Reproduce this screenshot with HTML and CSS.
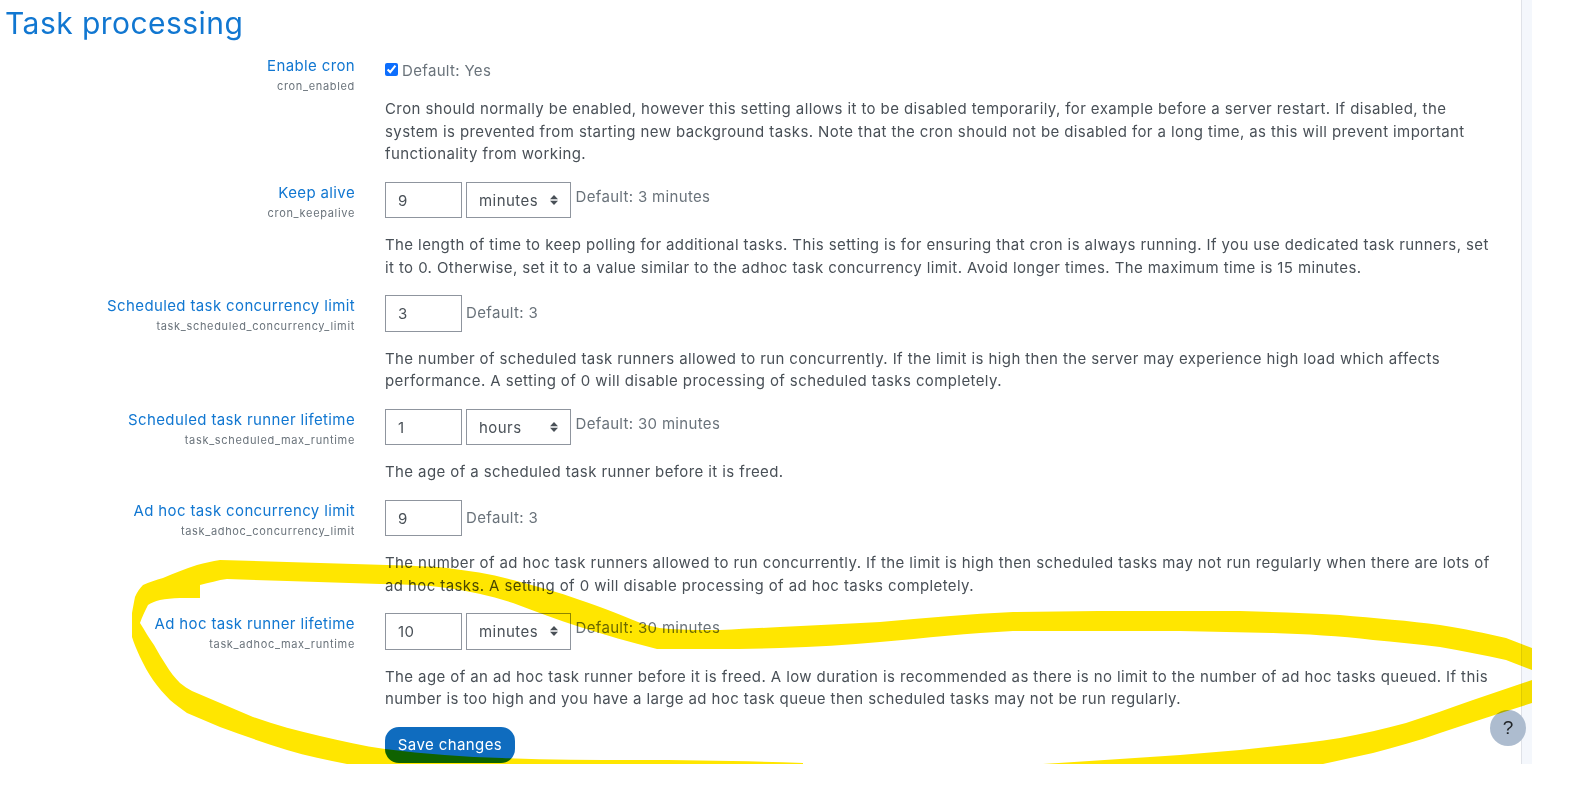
FILE: index.html
```html
<!DOCTYPE html>
<html lang="en">
<head>
<meta charset="utf-8">
<title>Task processing</title>
<link rel="stylesheet" href="styles.css">
</head>
<body>
<div class="page">
  <main class="main">
    <h2 class="title">Task processing</h2>

    <section class="row">
      <div class="label"><a class="name">Enable cron</a><small class="key">cron_enabled</small></div>
      <div class="field">
        <div class="control control-check">
          <input class="check" type="checkbox" checked>
          <span class="default">Default: Yes</span>
        </div>
        <p class="desc">Cron should normally be enabled, however this setting allows it to be disabled temporarily, for example before a server restart. If disabled, the<br>system is prevented from starting new background tasks. Note that the cron should not be disabled for a long time, as this will prevent important<br>functionality from working.</p>
      </div>
    </section>

    <section class="row">
      <div class="label"><a class="name">Keep alive</a><small class="key">cron_keepalive</small></div>
      <div class="field">
        <div class="control">
          <input class="num" type="text" value="9">
          <div class="select"><select class="sel"><option>minutes</option></select>
            <svg class="updown" viewBox="0 0 8 10" aria-hidden="true"><path d="M4 0 8 4.3H0zM4 10 0 5.7h8z"/></svg></div>
          <span class="default default-sel">Default: 3 minutes</span>
        </div>
        <p class="desc">The length of time to keep polling for additional tasks. This setting is for ensuring that cron is always running. If you use dedicated task runners, set<br>it to 0. Otherwise, set it to a value similar to the adhoc task concurrency limit. Avoid longer times. The maximum time is 15 minutes.</p>
      </div>
    </section>

    <section class="row">
      <div class="label"><a class="name">Scheduled task concurrency limit</a><small class="key">task_scheduled_concurrency_limit</small></div>
      <div class="field">
        <div class="control">
          <input class="num" type="text" value="3">
          <span class="default default-num">Default: 3</span>
        </div>
        <p class="desc">The number of scheduled task runners allowed to run concurrently. If the limit is high then the server may experience high load which affects<br>performance. A setting of 0 will disable processing of scheduled tasks completely.</p>
      </div>
    </section>

    <section class="row">
      <div class="label"><a class="name">Scheduled task runner lifetime</a><small class="key">task_scheduled_max_runtime</small></div>
      <div class="field">
        <div class="control">
          <input class="num" type="text" value="1">
          <div class="select"><select class="sel"><option>hours</option></select>
            <svg class="updown" viewBox="0 0 8 10" aria-hidden="true"><path d="M4 0 8 4.3H0zM4 10 0 5.7h8z"/></svg></div>
          <span class="default default-sel">Default: 30 minutes</span>
        </div>
        <p class="desc">The age of a scheduled task runner before it is freed.</p>
      </div>
    </section>

    <section class="row">
      <div class="label"><a class="name">Ad hoc task concurrency limit</a><small class="key">task_adhoc_concurrency_limit</small></div>
      <div class="field">
        <div class="control">
          <input class="num" type="text" value="9">
          <span class="default default-num">Default: 3</span>
        </div>
        <p class="desc">The number of ad hoc task runners allowed to run concurrently. If the limit is high then scheduled tasks may not run regularly when there are lots of<br>ad hoc tasks. A setting of 0 will disable processing of ad hoc tasks completely.</p>
      </div>
    </section>

    <section class="row">
      <div class="label"><a class="name">Ad hoc task runner lifetime</a><small class="key">task_adhoc_max_runtime</small></div>
      <div class="field">
        <div class="control">
          <input class="num" type="text" value="10">
          <div class="select"><select class="sel"><option>minutes</option></select>
            <svg class="updown" viewBox="0 0 8 10" aria-hidden="true"><path d="M4 0 8 4.3H0zM4 10 0 5.7h8z"/></svg></div>
          <span class="default default-sel">Default: 30 minutes</span>
        </div>
        <p class="desc">The age of an ad hoc task runner before it is freed. A low duration is recommended as there is no limit to the number of ad hoc tasks queued. If this<br>number is too high and you have a large ad hoc task queue then scheduled tasks may not be run regularly.</p>
      </div>
    </section>

    <div class="actions"><button class="save" type="button">Save changes</button></div>
  </main>
  <aside class="rail"></aside>
  <button class="help" type="button">?</button>
  <svg class="marker" viewBox="0 0 1532 764" aria-hidden="true">
    <path fill="#ffe600" d="M220 560 C245 561 265 561 287 562 L387 565 C410 566 430 566 447 568 C470 571 492 574 513 580 C535 586 558 592 580 600 C600 607 617 613 633 620 C645 625 655 628 670 629 C685 630 702 630 720 630 C742 629 760 628 780 627 C815 625 848 624 880 622 C925 618 970 614 1013 612 C1070 611 1125 611 1180 611 C1200 611 1220 611 1240 611 C1275 612 1305 613 1340 615 C1375 618 1410 621 1440 625 C1465 629 1485 633 1506 638 L1532 648 V670 L1506 660 C1485 655 1462 651 1440 647 C1418 644 1395 642 1373 640 C1340 636 1305 634 1273 633 L1180 631 H1013 C970 633 925 638 880 642 C848 645 815 647 780 648 C758 649 735 649 713 649 L657 649 C630 642 605 635 580 627 C558 620 535 611 513 603 C492 596 470 591 447 588 C425 585 403 584 380 584 L287 581 L227 579 C218 580 209 583 200 585 V598 L180 598 C172 598 166 599 160 600 C155 601 151 603 148 605 C145 611 142 617 140 623 C145 631 149 638 154 645 C158 652 162 659 166 665 C170 672 175 678 180 683 C184 686 188 689 192 691 L253 717 C275 725 298 731 320 736 C342 741 363 746 385 749 C425 754 465 757 502 758 C545 760 590 760 636 760 C690 760 750 761 803 763 V764 H347 C327 760 307 756 287 750 C264 743 242 735 220 727 L187 713 C181 709 175 704 170 700 C164 694 158 687 153 680 C148 673 144 665 140 657 C137 650 134 644 132 637 V613 C133 607 134 602 135 597 C137 592 140 588 143 585 C149 582 156 580 163 578 C174 573 185 569 197 565 C205 563 212 561 220 560 Z M1043 764 C1090 761 1135 758 1180 755 L1240 750 C1275 746 1310 743 1340 738 C1362 734 1384 729 1406 723 C1428 716 1450 708 1473 700 L1532 680 V703 C1500 713 1470 723 1440 733 C1418 741 1395 747 1373 753 C1356 757 1340 760 1323 764 Z"/>
  </svg>
</div>
</body>
</html>
```
FILE: styles.css
```css
* { box-sizing: border-box; }
html, body { margin: 0; padding: 0; background: #fff; }
body {
  font-family: Inter, "Noto Sans", sans-serif;
  font-size: 15px;
  color: #495057;
}
.page {
  position: relative;
  display: flex;
  width: 1532px;
  height: 764px;
  overflow: hidden;
}
.main { flex: 1; min-width: 0; }
.title {
  margin: 0;
  padding: 5px 0 0 5px;
  height: 55.4px;
  font-size: 30px;
  line-height: 36px;
  font-weight: 400;
  letter-spacing: 0.45px;
  color: #1177d1;
}
.row {
  display: grid;
  grid-template-columns: 355px 1fr;
  column-gap: 30px;
  margin-bottom: 16px;
}
.label {
  display: flex;
  flex-direction: column;
  align-items: flex-end;
}
.name { color: #1177d1; line-height: 22px; letter-spacing: 0.37px; }
.key { color: #6a737b; font-size: 11px; line-height: 16px; margin-top: 1px; letter-spacing: 0.67px; }
.control { display: flex; align-items: flex-start; }
.control-check { height: 27px; align-items: center; }
.check {
  width: 13px;
  height: 13px;
  margin: 2px 4px 0 0;
  accent-color: #0d6efd;
}
.num, .sel {
  height: 36.5px;
  border: 1px solid #8f959e;
  border-radius: 0;
  background: #fff;
  color: #495057;
  font: inherit;
  letter-spacing: 0.45px;
  padding: 0 0 0 12px;
  outline: none;
}
.num { width: 77px; }
.select { position: relative; margin-left: 4px; }
.sel { display: block; width: 105px; appearance: none; }
.updown {
  position: absolute;
  right: 13px;
  top: 13px;
  width: 8px;
  height: 10px;
  fill: #495057;
  pointer-events: none;
}
.default { color: #6a737b; line-height: 22.5px; letter-spacing: 0.33px; }
.control-check .default { padding-top: 5px; }
.default-sel { margin: 4px 0 0 4.5px; }
.default-num { margin: 7px 0 0 4px; }
.desc {
  margin: 16px 0 0;
  line-height: 22.5px;
  white-space: nowrap;
  letter-spacing: 0.4px;
}
.actions { padding-left: 385px; }
.save {
  display: block;
  width: 130px;
  height: 36.5px;
  padding: 0 0 2px;
  border: 0;
  border-radius: 14px;
  background: #0f6cbf;
  color: #fff;
  font: inherit;
  letter-spacing: 0.4px;
}
.rail {
  width: 11px;
  flex: none;
  background: #f4f7fc;
  border-left: 1px solid #dfe2e8;
}
.help {
  position: absolute;
  left: 1490px;
  top: 710px;
  width: 36px;
  height: 36px;
  padding: 0;
  border: 0;
  border-radius: 50%;
  background: #adbccf;
  color: #212529;
  font: 19px/36px "Liberation Sans", sans-serif;
}
.marker {
  position: absolute;
  left: 0;
  top: 0;
  width: 1532px;
  height: 764px;
  mix-blend-mode: multiply;
  pointer-events: none;
}
```
